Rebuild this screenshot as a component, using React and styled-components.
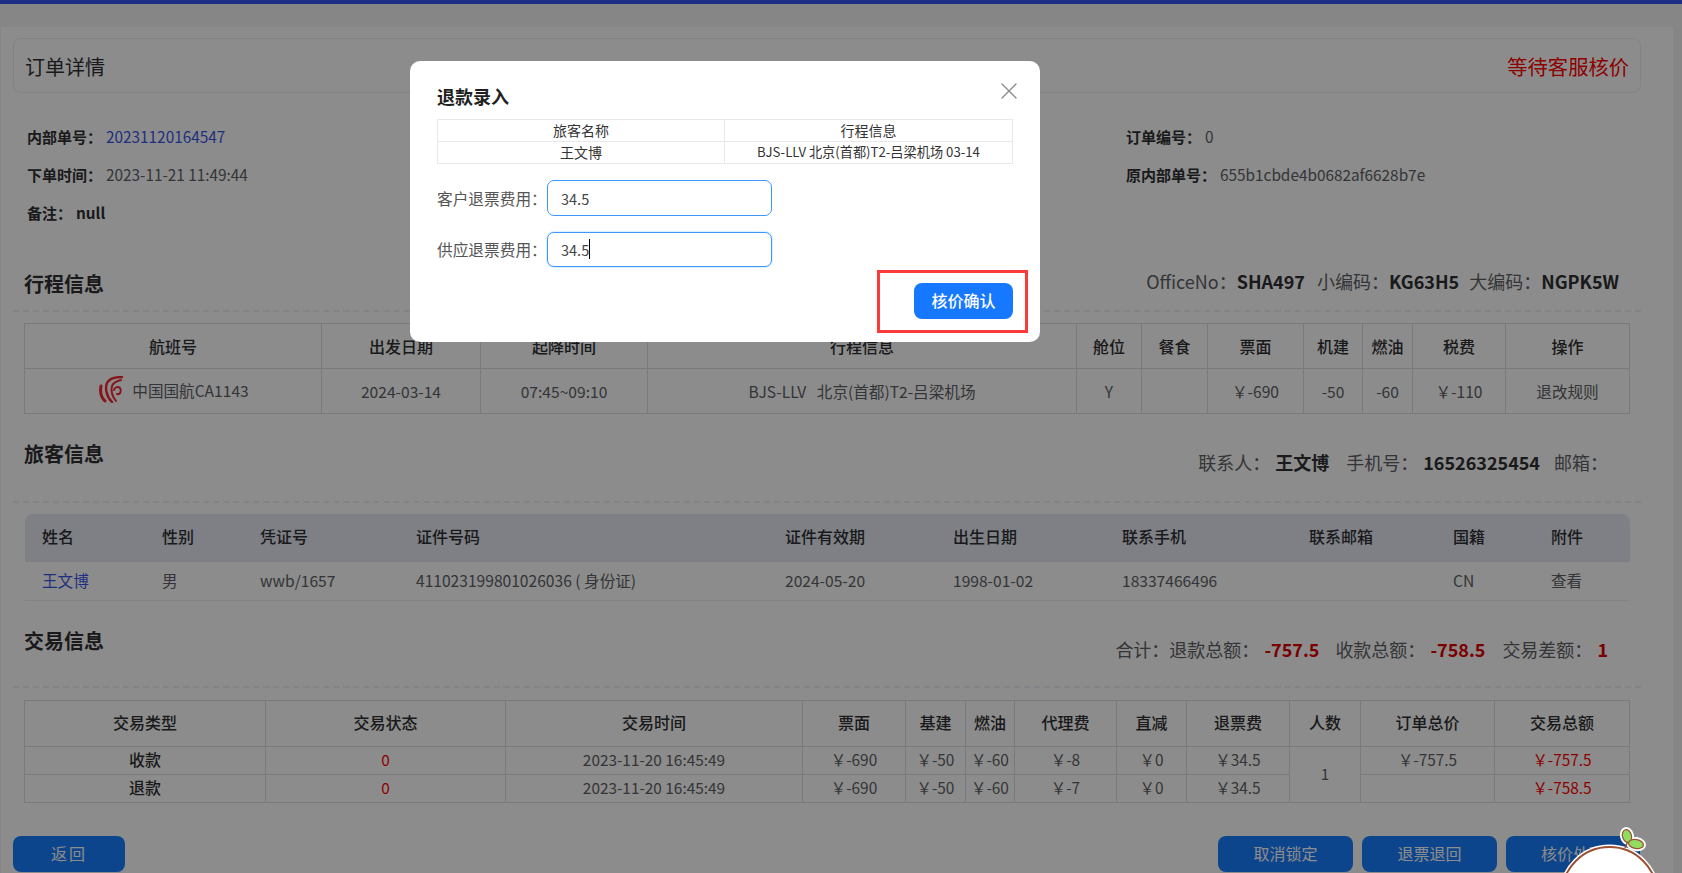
import React from 'react';
import styled, { createGlobalStyle } from 'styled-components';
import { X } from 'lucide-react';

const GlobalStyle = createGlobalStyle`
  html, body {
    margin: 0;
    padding: 0;
    height: 873px;
    overflow: hidden;
    background: #f4f4f4;
    font-family: "Noto Sans CJK SC", "Liberation Sans", sans-serif;
    color: #606266;
  }
  * { box-sizing: border-box; }
`;

const TopLine = styled.div`
  height: 4px;
  background: #3554f0;
`;

const HeaderStrip = styled.div`
  height: 23px;
  background: #f4f4f4;
`;

const Page = styled.div`
  height: 846px;
  margin: 0 9px 0 1px;
  padding: 11px 32px 0 12px;
  background: #fff;
`;

const TitleCard = styled.div`
  height: 55px;
  display: flex;
  align-items: center;
  justify-content: space-between;
  padding: 1px 11px 0;
  border: 1px solid #ebeef5;
  border-radius: 8px;
  font-size: 20px;
  color: #303133;
`;

const StatusText = styled.span`
  font-size: 20.3px;
  color: #f00;
`;

const InfoGrid = styled.div`
  display: grid;
  grid-template-columns: 549px 550px 1fr;
  grid-auto-rows: 38px;
  height: 127px;
  margin-top: 24px;
  padding-left: 14px;
  align-items: center;
  font-size: 15px;
`;

const InfoItem = styled.div`
  grid-column: ${(p) => p.$col || 1};
  grid-row: ${(p) => p.$row};
`;

const InfoLabel = styled.b`
  color: #303133;
  font-weight: 700;
  margin-right: 4px;
`;

const InfoValue = styled.span`
  font-size: 15.35px;
  color: ${(p) => (p.$link ? '#3a57e8' : p.$strong ? '#303133' : '#606266')};
  font-weight: ${(p) => (p.$strong ? 700 : 400)};
`;

const SectionHead = styled.div`
  height: ${(p) => p.$height}px;
  display: flex;
  justify-content: space-between;
  align-items: flex-start;
  border-bottom: 2px dashed #ebeef5;
`;

const SectionTitle = styled.h3`
  margin: 26px 0 0 11px;
  font-size: 20px;
  line-height: 28px;
  font-weight: 700;
  color: #303133;
`;

const Summary = styled.div`
  display: flex;
  margin-top: ${(p) => p.$top}px;
  padding-right: ${(p) => p.$right}px;
  font-size: 18px;
  line-height: 28px;
  color: #606266;
`;

const SummaryValue = styled.b`
  margin: 0 ${(p) => p.$gap ?? 17}px 0 ${(p) => p.$lead ?? 5}px;
  font-weight: 700;
  color: ${(p) => (p.$red ? '#e00000' : '#303133')};
`;

const GridTable = styled.table`
  width: 1605px;
  margin: ${(p) => p.$top}px 0 0 11px;
  table-layout: fixed;
  border-collapse: collapse;
  font-size: ${(p) => p.$size}px;
  text-align: center;

  th, td {
    border: 1px solid #dcdfe6;
    padding: 0 0 ${(p) => p.$lift}px;
  }

  th {
    font-size: 16px;
    font-weight: 500;
    color: #303133;
  }
`;

const FlightCell = styled.div`
  display: flex;
  align-items: center;
  justify-content: center;
  gap: 9px;
  margin-top: -3px;
  padding-left: 2px;
`;

const HeadRow = styled.tr`
  height: ${(p) => p.$height}px;
`;

const BodyRow = styled.tr`
  height: ${(p) => p.$height}px;
`;

const TypeCell = styled.td`
  font-size: 16px;
  font-weight: 500;
  color: #303133;
`;

const RedCell = styled.td`
  color: #f00;
`;

const PassengerGrid = styled.div`
  width: 1605px;
  margin: 11px 0 0 12px;
  display: grid;
  grid-template-columns: 137px 98px 156px 369px 168px 169px 187px 144px 98px 1fr;
`;

const PassengerHeadCell = styled.div`
  height: 48px;
  display: flex;
  align-items: center;
  background: #e5e9f2;
  font-size: 16px;
  font-weight: 500;
  color: #303133;
  padding: 0 0 5px ${(p) => p.$pad || 0}px;
  border-radius: ${(p) => (p.$first ? '8px 0 0 0' : p.$last ? '0 8px 0 0' : '0')};
`;

const PassengerCell = styled.div`
  height: 39px;
  display: flex;
  align-items: center;
  border-bottom: 1px solid #ebeef5;
  font-size: 15.6px;
  padding: 0 0 3px ${(p) => p.$pad || 0}px;
  color: ${(p) => (p.$link ? '#3a57e8' : '#606266')};
`;

const Footer = styled.div`
  display: flex;
  justify-content: space-between;
  margin-top: 33px;
  padding-right: 1px;
`;

const FooterGroup = styled.div`
  display: flex;
  gap: 9px;
`;

const BlueButton = styled.button`
  width: ${(p) => p.$width}px;
  height: 36px;
  border: none;
  border-radius: 8px;
  background: #187eff;
  color: #fff;
  font-family: inherit;
  font-size: 16px;
  letter-spacing: ${(p) => (p.$wide ? '2px' : '0')};
  padding: 0 0 2px;
`;

const Mask = styled.div`
  position: fixed;
  inset: 0;
  background: rgba(0, 0, 0, 0.45);
`;

const Modal = styled.div`
  position: fixed;
  left: 410px;
  top: 61px;
  width: 630px;
  height: 281px;
  padding: 23px 27px 0;
  background: #fff;
  border-radius: 10px;
  color: #333;
`;

const ModalTitle = styled.div`
  font-size: 18px;
  line-height: 24px;
  font-weight: 700;
  color: #1f1f1f;
`;

const CloseButton = styled.span`
  position: absolute;
  top: 16px;
  right: 17px;
  display: flex;
  color: #8c8c8c;
`;

const MiniTable = styled.table`
  width: 576px;
  margin-top: 11px;
  table-layout: fixed;
  border-collapse: collapse;
  font-size: 14px;
  line-height: 18px;
  text-align: center;

  td {
    height: 22px;
    padding: 0 0 1px;
    border: 1px solid #e8e8e8;
  }

  td:first-child {
    width: 287px;
  }
`;

const MiniRoute = styled.td`
  font-size: 13.2px;
`;

const FieldRow = styled.div`
  display: flex;
  align-items: center;
  margin-top: 16px;
  height: ${(p) => p.$height}px;
  font-size: 15.7px;
  color: #555;
`;

const FieldLabel = styled.span`
  width: 110px;
`;

const FakeInput = styled.div`
  width: 225px;
  height: 100%;
  display: flex;
  align-items: center;
  padding: 0 0 ${(p) => (p.$focus ? 1 : 0)}px 13px;
  border: 1px solid #4096ff;
  border-radius: 7px;
  background: #fff;
  font-size: 14.5px;
  color: #444;
  box-shadow: ${(p) => (p.$focus ? '0 0 0 1px rgba(5, 145, 255, 0.15)' : 'none')};
`;

const Caret = styled.i`
  width: 1px;
  height: 20px;
  background: #000;
`;

const ModalFooter = styled.div`
  display: flex;
  justify-content: flex-end;
  margin-top: 16px;
`;

const ConfirmButton = styled.button`
  width: 99px;
  height: 36px;
  border: none;
  border-radius: 8px;
  background: #1677ff;
  color: #fff;
  font-family: inherit;
  font-size: 16px;
  font-weight: 500;
  padding: 0 0 3px;
`;

const Highlight = styled.div`
  position: absolute;
  left: 467px;
  top: 209px;
  width: 151px;
  height: 63px;
  border: 3px solid #fb3a3a;
  pointer-events: none;
`;

const Mascot = styled.svg`
  position: fixed;
  right: 12px;
  bottom: 0;
`;

const flightCols = [297, 159, 167, 429, 65, 66, 96, 59, 50, 93, 124];
const flightHead = ['航班号', '出发日期', '起降时间', '行程信息', '舱位', '餐食', '票面', '机建', '燃油', '税费', '操作'];
const tradeCols = [241, 240, 297, 103, 60, 49, 102, 70, 103, 71, 134, 135];
const tradeHead = ['交易类型', '交易状态', '交易时间', '票面', '基建', '燃油', '代理费', '直减', '退票费', '人数', '订单总价', '交易总额'];

const passengerHead = ['姓名', '性别', '凭证号', '证件号码', '证件有效期', '出生日期', '联系手机', '联系邮箱', '国籍', '附件'];
const passengerRow = ['王文博', '男', 'wwb/1657', '411023199801026036 ( 身份证)', '2024-05-20', '1998-01-02', '18337466496', '', 'CN', '查看'];

function AirChinaLogo() {
  return (
    <svg width="24" height="27" viewBox="0 0 24 27" fill="none" stroke="#f52833" strokeLinecap="round">
      <path d="M2 10C1 15 2 21 6 25" strokeWidth="3" />
      <path d="M23 1C16 1 10 3 8 7C6 12 7 20 13 26" strokeWidth="2.4" />
      <path d="M22 4C18 5 14 7 13 10C12 14 13 20 17 25" strokeWidth="2" />
      <path d="M15 14C16 11 19 10 21 12C23 15 21 19 18 18" strokeWidth="2" />
    </svg>
  );
}

function SproutMascot() {
  return (
    <Mascot width="120" height="48" viewBox="0 0 120 48">
      <g stroke="#fff" strokeWidth="5" fill="#fff">
        <circle cx="59.500" cy="69.700" r="47.700" />
        <ellipse cx="77" cy="11" rx="4.500" ry="6.500" transform="rotate(-15 77 11)" />
        <ellipse cx="86" cy="19" rx="7.500" ry="4.500" transform="rotate(10 86 19)" />
      </g>
      <circle cx="59.500" cy="69.700" r="47.700" fill="#fff" stroke="#9c4f32" strokeWidth="2" />
      <path d="M75 23L78 16" stroke="#9c4f32" strokeWidth="1.500" />
      <ellipse cx="77" cy="11" rx="4.500" ry="6.500" transform="rotate(-15 77 11)" fill="#8fdc60" stroke="#9c4f32" strokeWidth="1.200" />
      <ellipse cx="86" cy="19" rx="7.500" ry="4.500" transform="rotate(10 86 19)" fill="#8fdc60" stroke="#9c4f32" strokeWidth="1.200" />
    </Mascot>
  );
}

export default function App() {
  return (
    <>
      <GlobalStyle />
      <TopLine />
      <HeaderStrip />
      <Page>
        <TitleCard>
          <span>订单详情</span>
          <StatusText>等待客服核价</StatusText>
        </TitleCard>

        <InfoGrid>
          <InfoItem $row={1}><InfoLabel>内部单号：</InfoLabel><InfoValue $link>20231120164547</InfoValue></InfoItem>
          <InfoItem $row={2}><InfoLabel>下单时间：</InfoLabel><InfoValue>2023-11-21 11:49:44</InfoValue></InfoItem>
          <InfoItem $row={3}><InfoLabel>备注：</InfoLabel><InfoValue $strong>null</InfoValue></InfoItem>
          <InfoItem $row={1} $col={3}><InfoLabel>订单编号：</InfoLabel><InfoValue>0</InfoValue></InfoItem>
          <InfoItem $row={2} $col={3}><InfoLabel>原内部单号：</InfoLabel><InfoValue>655b1cbde4b0682af6628b7e</InfoValue></InfoItem>
        </InfoGrid>

        <SectionHead $height={68}>
          <SectionTitle>行程信息</SectionTitle>
          <Summary $top={23} $right={22}>
            OfficeNo：<SummaryValue $lead={0} $gap={12}>SHA497</SummaryValue>
            小编码：<SummaryValue $lead={0} $gap={10}>KG63H5</SummaryValue>
            大编码：<SummaryValue $lead={0} $gap={0}>NGPK5W</SummaryValue>
          </Summary>
        </SectionHead>
        <GridTable $top={11} $size={15.6} $lift={0}>
          <colgroup>{flightCols.map((w, i) => <col key={i} width={w} />)}</colgroup>
          <thead>
            <HeadRow $height={45}>{flightHead.map((h) => <th key={h}>{h}</th>)}</HeadRow>
          </thead>
          <tbody>
            <BodyRow $height={45}>
              <td><FlightCell><AirChinaLogo />中国国航CA1143</FlightCell></td>
              <td>2024-03-14</td>
              <td>07:45~09:10</td>
              <td>BJS-LLV &nbsp; 北京(首都)T2-吕梁机场</td>
              <td>Y</td>
              <td></td>
              <td>￥-690</td>
              <td>-50</td>
              <td>-60</td>
              <td>￥-110</td>
              <td>退改规则</td>
            </BodyRow>
          </tbody>
        </GridTable>

        <SectionHead $height={89}>
          <SectionTitle>旅客信息</SectionTitle>
          <Summary $top={34} $right={33}>
            联系人：<SummaryValue>王文博</SummaryValue>
            手机号：<SummaryValue $gap={14}>16526325454</SummaryValue>
            邮箱：
          </Summary>
        </SectionHead>
        <PassengerGrid>
          {passengerHead.map((h, i) => (
            <PassengerHeadCell key={h} $pad={i === 0 ? 17 : 0} $first={i === 0} $last={i === passengerHead.length - 1}>{h}</PassengerHeadCell>
          ))}
          {passengerRow.map((v, i) => (
            <PassengerCell key={i} $pad={i === 0 ? 17 : 0} $link={i === 0}>{v}</PassengerCell>
          ))}
        </PassengerGrid>

        <SectionHead $height={87}>
          <SectionTitle>交易信息</SectionTitle>
          <Summary $top={34} $right={33}>
            合计：退款总额：<SummaryValue $red $gap={16}>-757.5</SummaryValue>
            收款总额：<SummaryValue $red>-758.5</SummaryValue>
            交易差额：<SummaryValue $red $gap={0}>1</SummaryValue>
          </Summary>
        </SectionHead>
        <GridTable $top={12} $size={15.4} $lift={3}>
          <colgroup>{tradeCols.map((w, i) => <col key={i} width={w} />)}</colgroup>
          <thead>
            <HeadRow $height={46}>{tradeHead.map((h) => <th key={h}>{h}</th>)}</HeadRow>
          </thead>
          <tbody>
            <BodyRow $height={28}>
              <TypeCell>收款</TypeCell>
              <RedCell>0</RedCell>
              <td>2023-11-20 16:45:49</td>
              <td>￥-690</td>
              <td>￥-50</td>
              <td>￥-60</td>
              <td>￥-8</td>
              <td>￥0</td>
              <td>￥34.5</td>
              <td rowSpan={2}>1</td>
              <td>￥-757.5</td>
              <RedCell>￥-757.5</RedCell>
            </BodyRow>
            <BodyRow $height={28}>
              <TypeCell>退款</TypeCell>
              <RedCell>0</RedCell>
              <td>2023-11-20 16:45:49</td>
              <td>￥-690</td>
              <td>￥-50</td>
              <td>￥-60</td>
              <td>￥-7</td>
              <td>￥0</td>
              <td>￥34.5</td>
              <td></td>
              <RedCell>￥-758.5</RedCell>
            </BodyRow>
          </tbody>
        </GridTable>

        <Footer>
          <BlueButton $width={112} $wide>返回</BlueButton>
          <FooterGroup>
            <BlueButton $width={135}>取消锁定</BlueButton>
            <BlueButton $width={135}>退票退回</BlueButton>
            <BlueButton $width={134}>核价处理</BlueButton>
          </FooterGroup>
        </Footer>
      </Page>

      <Mask />
      <Modal>
        <ModalTitle>退款录入</ModalTitle>
        <CloseButton><X size={28} strokeWidth={1.2} /></CloseButton>
        <MiniTable>
          <tbody>
            <tr><td>旅客名称</td><td>行程信息</td></tr>
            <tr><td>王文博</td><MiniRoute>BJS-LLV 北京(首都)T2-吕梁机场 03-14</MiniRoute></tr>
          </tbody>
        </MiniTable>
        <FieldRow $height={36}>
          <FieldLabel>客户退票费用：</FieldLabel>
          <FakeInput>34.5</FakeInput>
        </FieldRow>
        <FieldRow $height={35}>
          <FieldLabel>供应退票费用：</FieldLabel>
          <FakeInput $focus>34.5<Caret /></FakeInput>
        </FieldRow>
        <ModalFooter>
          <ConfirmButton>核价确认</ConfirmButton>
        </ModalFooter>
        <Highlight />
      </Modal>
      <SproutMascot />
    </>
  );
}
